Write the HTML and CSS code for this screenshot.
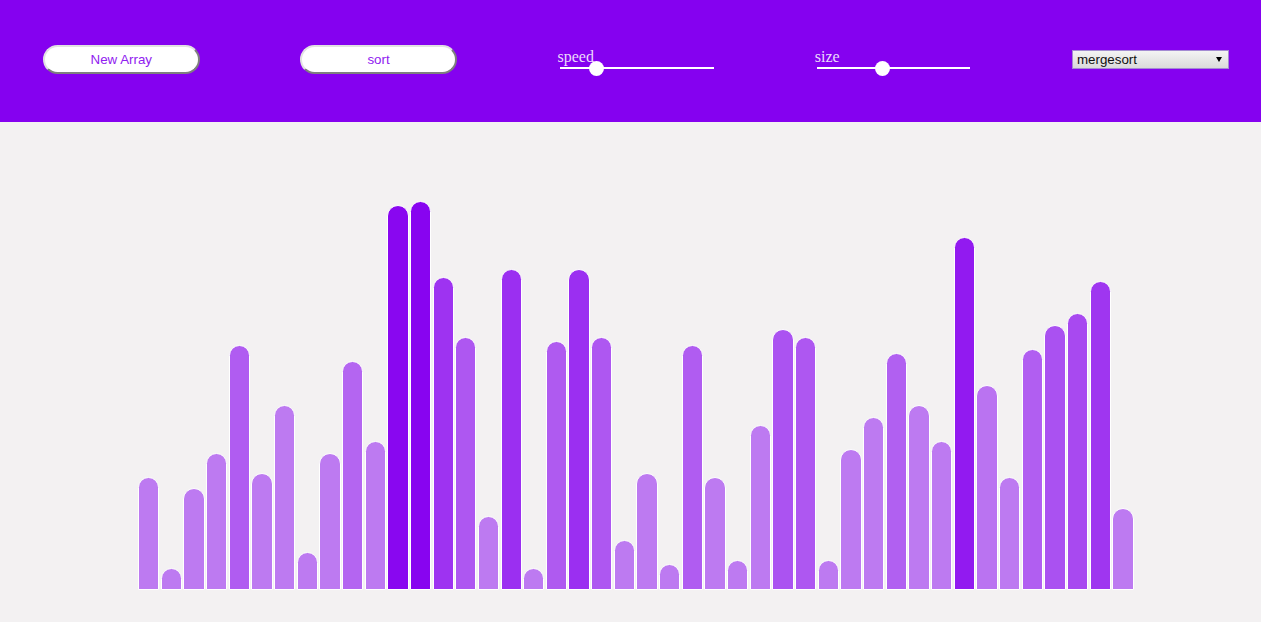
FILE: index.html
```html
<!DOCTYPE html>
<html lang="en">
<head>
<meta charset="utf-8">
<title>Sorting Visualizer</title>
<link rel="stylesheet" href="styles.css">
</head>
<body>
<header class="toolbar">
  <button class="pill-btn">New Array</button>
  <button class="pill-btn">sort</button>
  <div class="slider-group">
    <span class="slider-label">speed</span>
    <div class="track"><span class="thumb" style="left:29.5px"></span></div>
  </div>
  <div class="slider-group">
    <span class="slider-label">size</span>
    <div class="track track-size"><span class="thumb" style="left:58.5px"></span></div>
  </div>
  <div class="select-box">
    <span class="select-text">mergesort</span>
    <span class="select-arrow"></span>
  </div>
</header>
<main class="chart">
  <div class="bar" style="height:113px;background:rgba(136,4,240,0.5)"></div>
  <div class="bar" style="height:22px;background:rgba(136,4,240,0.5)"></div>
  <div class="bar" style="height:102px;background:rgba(136,4,240,0.5)"></div>
  <div class="bar" style="height:137px;background:rgba(136,4,240,0.5)"></div>
  <div class="bar" style="height:245px;background:rgba(136,4,240,0.63)"></div>
  <div class="bar" style="height:117px;background:rgba(136,4,240,0.5)"></div>
  <div class="bar" style="height:185px;background:rgba(136,4,240,0.5)"></div>
  <div class="bar" style="height:38px;background:rgba(136,4,240,0.5)"></div>
  <div class="bar" style="height:137px;background:rgba(136,4,240,0.5)"></div>
  <div class="bar" style="height:229px;background:rgba(136,4,240,0.59)"></div>
  <div class="bar" style="height:149px;background:rgba(136,4,240,0.5)"></div>
  <div class="bar" style="height:385px;background:rgba(136,4,240,0.99)"></div>
  <div class="bar" style="height:389px;background:rgba(136,4,240,1)"></div>
  <div class="bar" style="height:313px;background:rgba(136,4,240,0.8)"></div>
  <div class="bar" style="height:253px;background:rgba(136,4,240,0.65)"></div>
  <div class="bar" style="height:74px;background:rgba(136,4,240,0.5)"></div>
  <div class="bar" style="height:321px;background:rgba(136,4,240,0.82)"></div>
  <div class="bar" style="height:22px;background:rgba(136,4,240,0.5)"></div>
  <div class="bar" style="height:249px;background:rgba(136,4,240,0.64)"></div>
  <div class="bar" style="height:321px;background:rgba(136,4,240,0.82)"></div>
  <div class="bar" style="height:253px;background:rgba(136,4,240,0.65)"></div>
  <div class="bar" style="height:50px;background:rgba(136,4,240,0.5)"></div>
  <div class="bar" style="height:117px;background:rgba(136,4,240,0.5)"></div>
  <div class="bar" style="height:26px;background:rgba(136,4,240,0.5)"></div>
  <div class="bar" style="height:245px;background:rgba(136,4,240,0.63)"></div>
  <div class="bar" style="height:113px;background:rgba(136,4,240,0.5)"></div>
  <div class="bar" style="height:30px;background:rgba(136,4,240,0.5)"></div>
  <div class="bar" style="height:165px;background:rgba(136,4,240,0.5)"></div>
  <div class="bar" style="height:261px;background:rgba(136,4,240,0.67)"></div>
  <div class="bar" style="height:253px;background:rgba(136,4,240,0.65)"></div>
  <div class="bar" style="height:30px;background:rgba(136,4,240,0.5)"></div>
  <div class="bar" style="height:141px;background:rgba(136,4,240,0.5)"></div>
  <div class="bar" style="height:173px;background:rgba(136,4,240,0.5)"></div>
  <div class="bar" style="height:237px;background:rgba(136,4,240,0.61)"></div>
  <div class="bar" style="height:185px;background:rgba(136,4,240,0.5)"></div>
  <div class="bar" style="height:149px;background:rgba(136,4,240,0.5)"></div>
  <div class="bar" style="height:353px;background:rgba(136,4,240,0.91)"></div>
  <div class="bar" style="height:205px;background:rgba(136,4,240,0.53)"></div>
  <div class="bar" style="height:113px;background:rgba(136,4,240,0.5)"></div>
  <div class="bar" style="height:241px;background:rgba(136,4,240,0.62)"></div>
  <div class="bar" style="height:265px;background:rgba(136,4,240,0.68)"></div>
  <div class="bar" style="height:277px;background:rgba(136,4,240,0.71)"></div>
  <div class="bar" style="height:309px;background:rgba(136,4,240,0.79)"></div>
  <div class="bar" style="height:82px;background:rgba(136,4,240,0.5)"></div>
</main>
</body>
</html>
```

FILE: styles.css
```css
* {
  box-sizing: border-box;
}

html, body {
  margin: 0;
  padding: 0;
}

body {
  background: #f3f1f2;
  font-family: "Liberation Sans", Arial, sans-serif;
  overflow: hidden;
}

.toolbar {
  height: 122px;
  background: #8501f0;
  display: flex;
  align-items: flex-start;
  gap: 100.75px;
  padding: 45px 0 0 43px;
}

.pill-btn {
  width: 156.5px;
  height: 28.5px;
  flex: none;
  margin: 0;
  padding: 0;
  background: #fff;
  border: 2px solid;
  border-color: #e2e2e2 #7f7f7f #7f7f7f #e2e2e2;
  border-radius: 15px;
  color: #9020f0;
  font-family: "Liberation Sans", Arial, sans-serif;
  font-size: 13.33px;
  line-height: 1;
}

.slider-group {
  width: 156.5px;
  flex: none;
  display: flex;
  flex-direction: column;
  margin-top: 2.5px;
}

.slider-label {
  font-family: "Liberation Serif", "Times New Roman", serif;
  font-size: 16px;
  line-height: 18px;
  height: 18px;
  color: #ecdcfb;
}

.track {
  position: relative;
  width: 154px;
  height: 2px;
  margin: 1.5px 0 0 2px;
  background: #fff;
}

.track-size {
  width: 153px;
}

.thumb {
  position: absolute;
  top: -6.5px;
  width: 15px;
  height: 15px;
  border-radius: 50%;
  background: #fff;
}

.select-box {
  position: relative;
  width: 157px;
  height: 19px;
  flex: none;
  margin-top: 5px;
  border: 1px solid #a48bd2;
  background: linear-gradient(#f4f4f4, #dadada);
  display: flex;
  align-items: center;
  padding-left: 4px;
}

.select-text {
  font-size: 13.33px;
  color: #111;
  line-height: 1;
}

.select-arrow {
  position: absolute;
  right: 6px;
  top: 6px;
  width: 0;
  height: 0;
  border-left: 3px solid transparent;
  border-right: 3px solid transparent;
  border-top: 5.5px solid #000;
}

.chart {
  height: 500px;
  display: flex;
  align-items: flex-end;
  gap: 1.374px;
  padding: 0 0 32px 138px;
}

.bar {
  width: 21.3px;
  flex: none;
  border: 1px solid #fff;
  border-radius: 11px 11px 0 0;
}
```
